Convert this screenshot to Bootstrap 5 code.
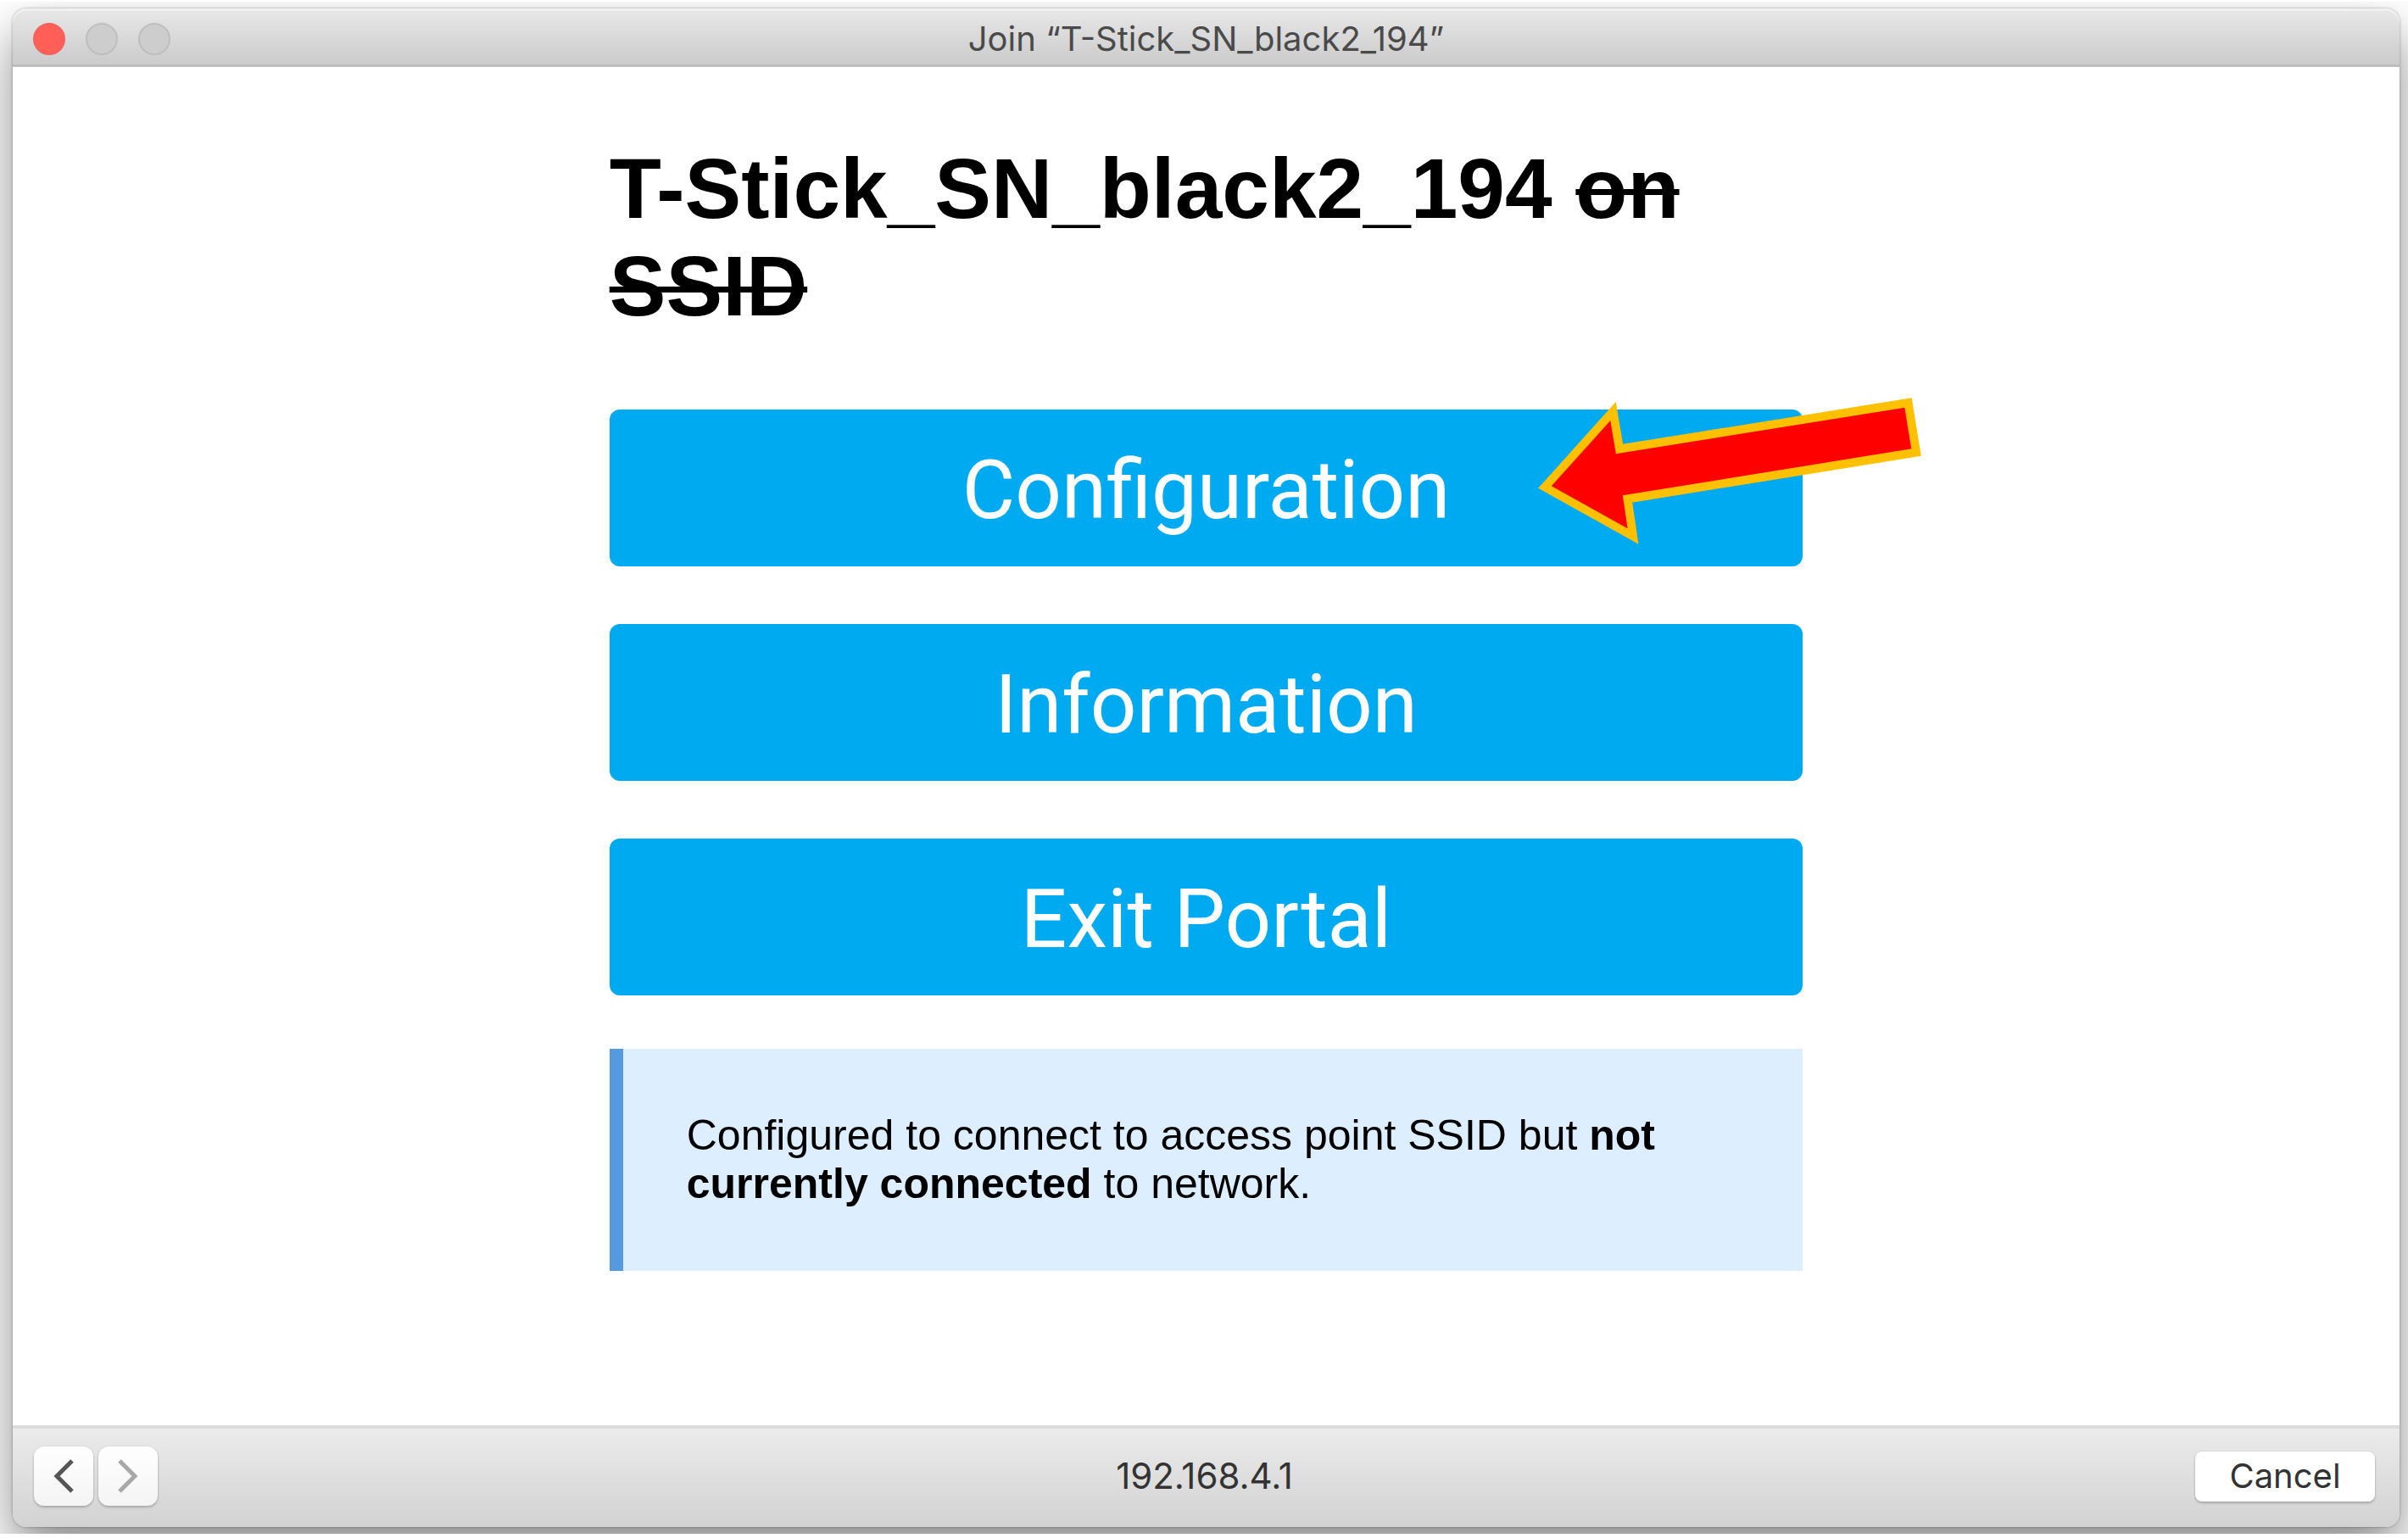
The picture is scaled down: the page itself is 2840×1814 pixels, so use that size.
<!DOCTYPE html>
<html lang="en">
<head>
<meta charset="utf-8">
<meta name="viewport" content="width=device-width, initial-scale=1">
<title>Join “T-Stick_SN_black2_194”</title>
<link rel="stylesheet" href="https://cdn.jsdelivr.net/npm/bootstrap@5.3.0/dist/css/bootstrap.min.css">
<style>
  body { background: #fff; padding: 2px 0 5px; font-family: "Liberation Sans", Arial, sans-serif; color: #000; }
  .backdrop { padding: 8px 10px 8px 15px; background: #fff; }
  .portal-window { border-radius: 16px; background: #fff; box-shadow: 0 0 3px rgba(0,0,0,.35), 0 30px 60px rgba(0,0,0,.45); }
  .system-text { font-family: Inter, Roboto, sans-serif; font-size: 40px; line-height: 48px; }
  .address-text { font-size: 42px; }
  .title-bar { height: 69px; padding: 6px 24px 0; border-bottom: 3px solid #bdbdbd; border-radius: 16px 16px 0 0;
    background: linear-gradient(#e8e8e8, #cbcbcb); box-shadow: inset 0 3px 0 #f0f0f0; color: #4a4a4a; }
  .side-cell { flex: 1 1 0; }
  .lights { gap: 24px; }
  .light { width: 38px; height: 38px; padding: 0; border: 2px solid #bebebe; border-radius: 50%; background: #cdcdcd; }
  .light-close { background: #ff5f57; border-color: #f4605a; }
  .portal-column { width: 50%; max-width: 1408px; padding-top: 86px; }
  .portal-heading { font-size: 100px; line-height: 115px; font-weight: 700; margin-bottom: 88px; }
  .portal-heading s { text-decoration-thickness: 7px; }
  .portal-actions { gap: 68px; }
  .btn-portal { --bs-btn-color: #fff; --bs-btn-bg: #00aaf1; --bs-btn-hover-color: #fff; --bs-btn-hover-bg: #0098d8;
    --bs-btn-border-width: 0; --bs-btn-border-radius: 12px; --bs-btn-font-size: 96px;
    --bs-btn-line-height: 117px; padding-top: 37px; padding-bottom: 31px; font-family: Roboto, Inter, sans-serif; }
  .pointer-arrow { width: 520px; height: 230px; right: -174px; top: -33px; pointer-events: none; }
  .status-note { margin-top: 63px; padding: 74px 75px; border-left: 16px solid #5599df; background: #dceeff; font-size: 50px; line-height: 57px; }
  .foot-bar { height: 120px; padding: 0 29px 4px 25px; border-top: 4px solid #dcdcdc; border-radius: 0 0 16px 16px;
    background: linear-gradient(#ebebeb, #d2d2d2); color: #333; }
  .nav-pair { gap: 6px; }
  .btn-mac { --bs-btn-bg: #fff; --bs-btn-color: #333; --bs-btn-border-width: 0; --bs-btn-hover-bg: #f4f4f4;
    --bs-btn-disabled-bg: #fbfbfb; --bs-btn-disabled-opacity: 1; --bs-btn-disabled-color: #a6a6a6; --bs-btn-border-radius: 10px;
    box-shadow: 0 2px 3px rgba(0,0,0,.2), 0 0 2px rgba(0,0,0,.15); }
  .btn-step { width: 70px; height: 70px; padding: 0; background: linear-gradient(#fff, #f4f4f4); color: #555; border-radius: 12px; }
  .btn-cancel { width: 212px; height: 59px; padding: 0; border-radius: 8px; }
</style>
</head>
<body class="d-flex flex-column min-vh-100">
<div class="backdrop d-flex flex-column flex-fill overflow-hidden">
  <div class="portal-window d-flex flex-column flex-fill">
    <header class="title-bar d-flex align-items-center">
      <div class="lights side-cell d-flex">
        <button type="button" class="light light-close" aria-label="Close"></button>
        <button type="button" class="light" aria-label="Minimize" disabled></button>
        <button type="button" class="light" aria-label="Zoom" disabled></button>
      </div>
      <div class="system-text">Join “T-Stick_SN_black2_194”</div>
      <div class="side-cell"></div>
    </header>

    <main class="flex-fill">
      <div class="portal-column mx-auto">
        <h1 class="portal-heading">T-Stick_SN_black2_194 <s>on SSID</s></h1>
        <div class="portal-actions d-grid">
          <div class="position-relative d-grid">
            <button type="button" class="btn btn-portal">Configuration</button>
            <svg class="pointer-arrow position-absolute" viewBox="0 0 520 230" aria-hidden="true">
              <path d="M42 124.500 122.500 35 130 79.500 470.500 25 480 83.500 139.500 138.500 146 182.500Z" fill="#f00" stroke="#ffc000" stroke-width="10" stroke-miterlimit="10"/>
            </svg>
          </div>
          <button type="button" class="btn btn-portal">Information</button>
          <button type="button" class="btn btn-portal">Exit Portal</button>
        </div>
        <div class="status-note">Configured to connect to access point SSID but <strong>not currently connected</strong> to network.</div>
      </div>
    </main>

    <footer class="foot-bar d-flex align-items-center">
      <div class="nav-pair side-cell d-flex">
        <button type="button" class="btn btn-mac btn-step d-flex align-items-center justify-content-center" aria-label="Back">
          <svg width="70" height="70" viewBox="0 0 70 70" fill="none" stroke="#555" stroke-width="5"><path d="M45 17 27 35 45 53"/></svg>
        </button>
        <button type="button" class="btn btn-mac btn-step d-flex align-items-center justify-content-center" aria-label="Forward" disabled>
          <svg width="70" height="70" viewBox="0 0 70 70" fill="none" stroke="#a8a8a8" stroke-width="5"><path d="M25 17 43 35 25 53"/></svg>
        </button>
      </div>
      <div class="system-text address-text">192.168.4.1</div>
      <div class="side-cell d-flex justify-content-end">
        <button type="button" class="btn btn-mac btn-cancel system-text">Cancel</button>
      </div>
    </footer>
  </div>
</div>
<script src="https://cdn.jsdelivr.net/npm/bootstrap@5.3.0/dist/js/bootstrap.bundle.min.js"></script>
</body>
</html>
